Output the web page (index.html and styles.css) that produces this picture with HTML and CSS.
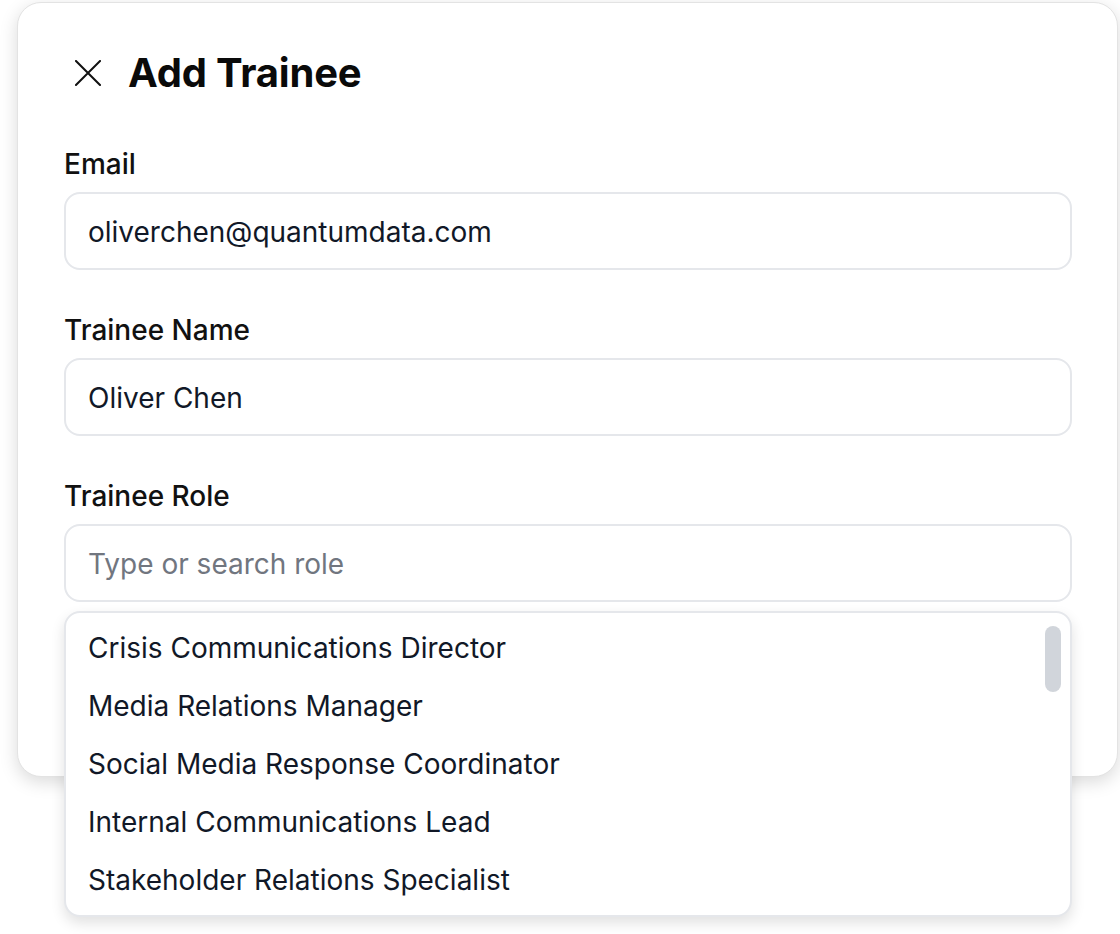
FILE: index.html
```html
<!DOCTYPE html>
<html lang="en">
<head>
<meta charset="utf-8">
<title>Add Trainee</title>
<link rel="stylesheet" href="styles.css">
</head>
<body>
  <div class="modal">
    <div class="modal-header">
      <button class="close-btn" type="button" aria-label="Close">
        <svg width="26" height="26" viewBox="0 0 26 26" fill="none" stroke="#111" stroke-width="2" stroke-linecap="square">
          <path d="M1 1 L25 25 M25 1 L1 25"/>
        </svg>
      </button>
      <h1 class="modal-title">Add Trainee</h1>
    </div>

    <div class="field">
      <label class="field-label">Email</label>
      <div class="input">oliverchen@quantumdata.com</div>
    </div>

    <div class="field">
      <label class="field-label">Trainee Name</label>
      <div class="input">Oliver Chen</div>
    </div>

    <div class="field">
      <label class="field-label">Trainee Role</label>
      <div class="combo">
        <div class="input placeholder">Type or search role</div>
        <ul class="dropdown">
          <li class="option">Crisis Communications Director</li>
          <li class="option">Media Relations Manager</li>
          <li class="option">Social Media Response Coordinator</li>
          <li class="option">Internal Communications Lead</li>
          <li class="option">Stakeholder Relations Specialist</li>
          <div class="scroll-thumb"></div>
        </ul>
      </div>
    </div>
  </div>
</body>
</html>
```

FILE: styles.css
```css
* {
  box-sizing: border-box;
}

html, body {
  margin: 0;
  padding: 0;
  background: #ffffff;
}

body {
  font-family: Inter, "Noto Sans", "Liberation Sans", sans-serif;
  color: #111111;
  width: 1120px;
  height: 934px;
  overflow: hidden;
}

.modal {
  margin: 2px 0 0 17px;
  width: 1101px;
  height: 775px;
  background: #ffffff;
  border: 1px solid #e3e3e3;
  border-radius: 24px;
  box-shadow: 0 5px 18px rgba(0, 0, 0, 0.15);
  padding: 47px 45px 0 46px;
}

.modal-header {
  display: flex;
  align-items: center;
  gap: 18px;
  height: 46px;
  margin-bottom: 48px;
}

.close-btn {
  width: 46px;
  height: 46px;
  padding: 0 0 0 1px;
  border: 0;
  background: none;
  display: flex;
  align-items: center;
  justify-content: center;
}

.modal-title {
  margin: 0;
  font-size: 40px;
  line-height: 46px;
  font-weight: 700;
  color: #0a0a0a;
  letter-spacing: -0.2px;
}

.field {
  margin-bottom: 40px;
}

.field-label {
  display: block;
  font-size: 28px;
  line-height: 40px;
  font-weight: 500;
  color: #111111;
  margin-bottom: 8px;
}

.combo {
  position: relative;
}

.input {
  height: 78px;
  border: 2px solid #e5e7eb;
  border-radius: 16px;
  padding: 2px 22px 0;
  display: flex;
  align-items: center;
  font-size: 28px;
  color: #111827;
  background: #ffffff;
}

.input.placeholder {
  color: #71767f;
}

.dropdown {
  position: absolute;
  left: 0;
  right: 0;
  top: calc(100% + 9px);
  margin: 0;
  padding: 6px 0;
  list-style: none;
  background: #ffffff;
  border: 2px solid #e5e7eb;
  border-radius: 16px;
  box-shadow: 0 6px 14px rgba(0, 0, 0, 0.12);
}

.option {
  height: 58px;
  padding: 0 22px;
  display: flex;
  align-items: center;
  font-size: 28px;
  color: #111827;
}

.scroll-thumb {
  position: absolute;
  top: 13px;
  right: 9px;
  width: 16px;
  height: 66px;
  border-radius: 8px;
  background: #d1d5db;
}
```
